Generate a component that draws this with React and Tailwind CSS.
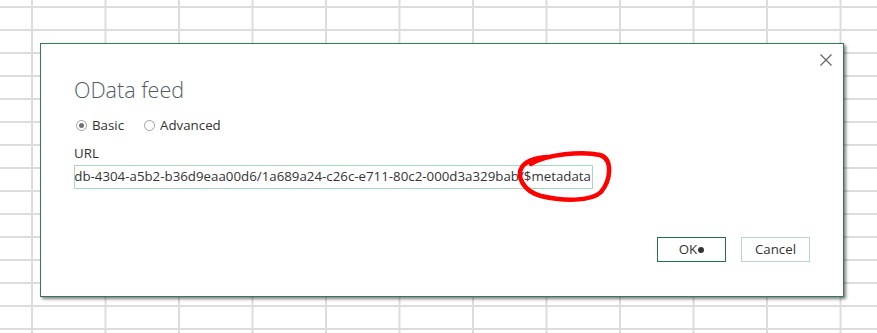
import React from "react";

function Radio({ checked, label }) {
  return (
    <label className="flex items-center gap-[5px]">
      <span className="flex h-[11px] w-[11px] items-center justify-center rounded-full border border-[#a0a0a0] bg-white">
        {checked && <span className="block h-[5px] w-[5px] rounded-full bg-[#707070]" />}
      </span>
      <span>{label}</span>
    </label>
  );
}

export default function App() {
  return (
    <div
      className="relative h-[333px] w-[877px] overflow-hidden bg-white bg-[linear-gradient(to_right,#dcdcdc_2px,transparent_2px),linear-gradient(to_bottom,#dcdcdc_2px,transparent_2px)] bg-size-[73.5px_23px] bg-position-[31px_6px] pl-[40px] pt-[43px]"
      style={{ fontFamily: '"Open Sans", "Noto Sans", sans-serif' }}
    >
      <div className="flex h-[254px] w-[804px] flex-col border border-[#367a52] bg-white shadow-[2px_2px_3px_rgba(0,0,0,0.5)]">
        <div className="flex justify-end pr-[11px] pt-[10px]">
          <svg width="12" height="12" viewBox="0 0 12 12">
            <path d="M0.5 0.5 L11.5 11.5 M11.5 0.5 L0.5 11.5" stroke="#666" strokeWidth="1.3" fill="none" />
          </svg>
        </div>
        <div className="pl-[33px]">
          <div className="mt-[10px] text-[21.5px] font-light leading-[28px] text-[#4f5d66]">OData feed</div>
          <div className="mt-[12px] flex gap-[20px] pl-[2px] text-[13.3px] leading-[18px] text-[#333]">
            <Radio checked label="Basic" />
            <Radio label="Advanced" />
          </div>
          <div className="mt-[10px] text-[13.3px] leading-[18px] text-[#333]">URL</div>
          <div className="mt-[3px] flex h-[24px] w-[519px] items-center overflow-hidden border border-[#a8d8bc] bg-white">
            <div className="flex w-full justify-end whitespace-nowrap pr-[1px] text-[13.3px] text-[#333]">
              db-4304-a5b2-b36d9eaa00d6/1a689a24-c26c-e711-80c2-000d3a329bab/$metadata
            </div>
          </div>
          <div className="mt-[48px] flex justify-end gap-[15px] pr-[33px] text-[13.3px] text-[#333]">
            <div className="flex h-[25px] w-[69px] items-center justify-center border border-[#217346]">
              <span>OK</span>
              <span className="ml-[1px] block h-[6px] w-[6px] rounded-full bg-[#333]" />
            </div>
            <div className="flex h-[25px] w-[69px] items-center justify-center border border-[#b8d4c4]">
              Cancel
            </div>
          </div>
        </div>
      </div>
      <svg className="pointer-events-none absolute left-0 top-0" width="877" height="333">
        <path
          d="M531 164 C546 154, 583 151, 600 155 C613 159, 611 180, 601 192 C591 202, 562 201, 541 196 C523 191, 516 176, 522 167 C526 161, 535 158, 547 157"
          stroke="#ff0000"
          strokeWidth="4.5"
          fill="none"
          strokeLinecap="round"
        />
      </svg>
    </div>
  );
}
